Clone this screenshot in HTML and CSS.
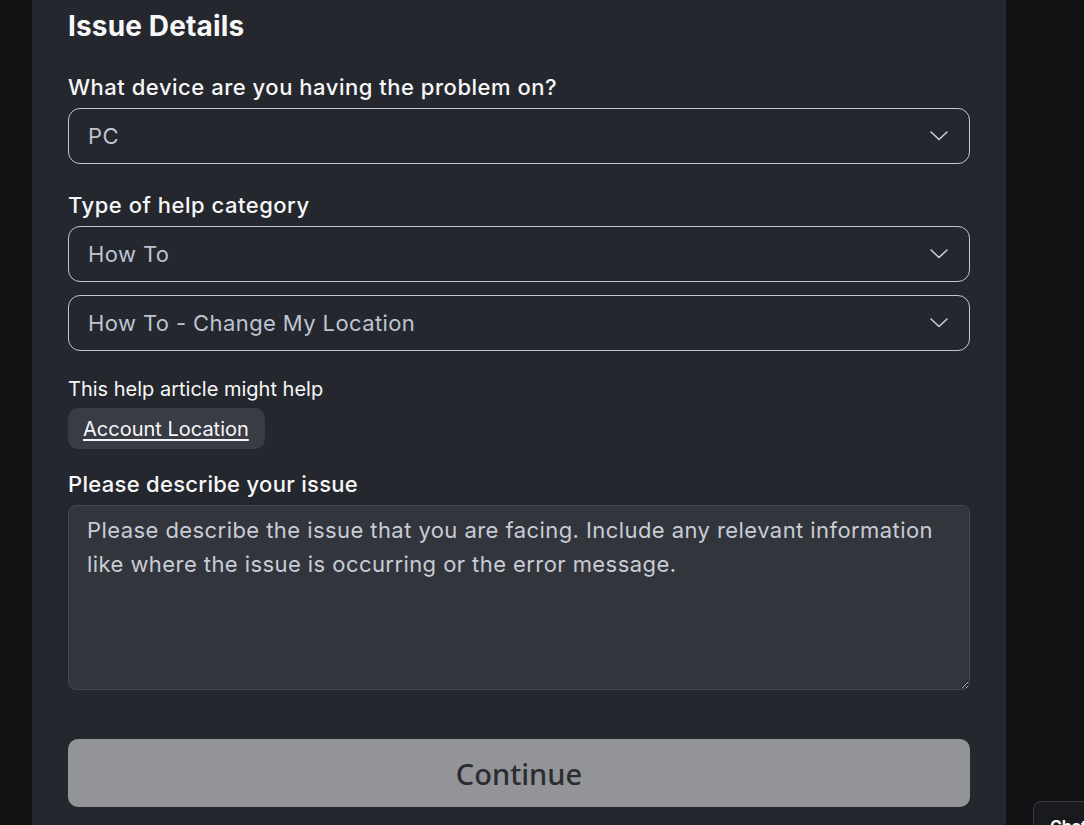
FILE: index.html
```html
<!DOCTYPE html>
<html lang="en">
<head>
<meta charset="utf-8">
<title>Issue Details</title>
<link rel="stylesheet" href="styles.css">
</head>
<body>
<main class="panel">
  <h2 class="title">Issue Details</h2>

  <label class="label first">What device are you having the problem on?</label>
  <div class="select">
    <span class="value">PC</span>
    <svg class="chev" width="18" height="10" viewBox="0 0 18 10"><polyline points="1,1 9,8.5 17,1" fill="none" stroke="#c9ccd3" stroke-width="1.6" stroke-linecap="round" stroke-linejoin="round"/></svg>
  </div>

  <label class="label">Type of help category</label>
  <div class="select">
    <span class="value">How To</span>
    <svg class="chev" width="18" height="10" viewBox="0 0 18 10"><polyline points="1,1 9,8.5 17,1" fill="none" stroke="#c9ccd3" stroke-width="1.6" stroke-linecap="round" stroke-linejoin="round"/></svg>
  </div>
  <div class="select second">
    <span class="value">How To - Change My Location</span>
    <svg class="chev" width="18" height="10" viewBox="0 0 18 10"><polyline points="1,1 9,8.5 17,1" fill="none" stroke="#c9ccd3" stroke-width="1.6" stroke-linecap="round" stroke-linejoin="round"/></svg>
  </div>

  <p class="hint">This help article might help</p>
  <div class="chips"><a class="chip" href="#">Account Location</a></div>

  <label class="label third">Please describe your issue</label>
  <textarea class="desc" placeholder="Please describe the issue that you are facing. Include any relevant information like where the issue is occurring or the error message."></textarea>

  <button class="continue" type="button">Continue</button>
</main>
<div class="chat">Chat</div>
</body>
</html>
```

FILE: styles.css
```css
html, body {
  margin: 0;
  padding: 0;
  background: #121214;
  height: 100%;
  overflow: hidden;
}

body {
  font-family: Inter, "Noto Sans", sans-serif;
  color: #f7f7f8;
}

.panel {
  box-sizing: border-box;
  margin-left: 32px;
  width: 974px;
  min-height: 900px;
  background: #25272e;
  padding: 10px 36px 0 36px;
  display: flex;
  flex-direction: column;
}

.title {
  margin: 0;
  font-size: 28px;
  line-height: 32px;
  font-weight: 700;
  letter-spacing: 0.15px;
}

.label {
  display: block;
  font-size: 22px;
  line-height: 24px;
  font-weight: 500;
  margin-top: 29px;
  margin-bottom: 9px;
  letter-spacing: 0.52px;
}

.label.first { margin-top: 33px; }
.label.third { margin-top: 23px; letter-spacing: 0.3px; }

.select {
  box-sizing: border-box;
  height: 56px;
  border: 1px solid #c3c6cd;
  border-radius: 12px;
  display: flex;
  align-items: center;
  justify-content: space-between;
  padding: 0 21px 0 19px;
}

.select.second { margin-top: 13px; }

.value {
  font-size: 22px;
  color: #bdc4d2;
  letter-spacing: 0.4px;
}

.chev { display: block; }

.hint {
  margin: 27px 0 8px 0;
  font-size: 20px;
  line-height: 22px;
  color: #f7f7f8;
  letter-spacing: 0;
}

.chips { display: flex; }

.chip {
  box-sizing: border-box;
  height: 41px;
  padding: 0 16px 0 15px;
  display: flex;
  align-items: center;
  background: #393b45;
  border-radius: 10px;
  color: #f7f7f8;
  font-size: 20px;
  text-decoration: underline;
  text-underline-offset: 3px;
  letter-spacing: 0;
}

.desc {
  box-sizing: border-box;
  display: block;
  width: 100%;
  height: 185px;
  background: #33353d;
  border: 1px solid #45474f;
  border-radius: 8px;
  padding: 7px 18px;
  font-family: Inter, "Noto Sans", sans-serif;
  font-size: 22px;
  line-height: 34px;
  color: #f7f7f8;
  resize: vertical;
  letter-spacing: 0.43px;
  outline: none;
}

.desc::placeholder { color: #c8ccd5; opacity: 1; }

.continue {
  margin-top: 49px;
  height: 68px;
  border: none;
  border-radius: 10px;
  background: #939497;
  color: #2a2c31;
  font-family: "Noto Sans", Inter, sans-serif;
  font-size: 29px;
  font-weight: 500;
  letter-spacing: 0;
}

.chat {
  position: fixed;
  left: 1033px;
  top: 801px;
  width: 90px;
  height: 50px;
  box-sizing: border-box;
  padding: 14px 0 0 16px;
  background: #191a1d;
  border: 1px solid #3a3b41;
  border-radius: 8px;
  color: #f7f7f8;
  font-size: 16px;
  font-weight: 700;
}
```
